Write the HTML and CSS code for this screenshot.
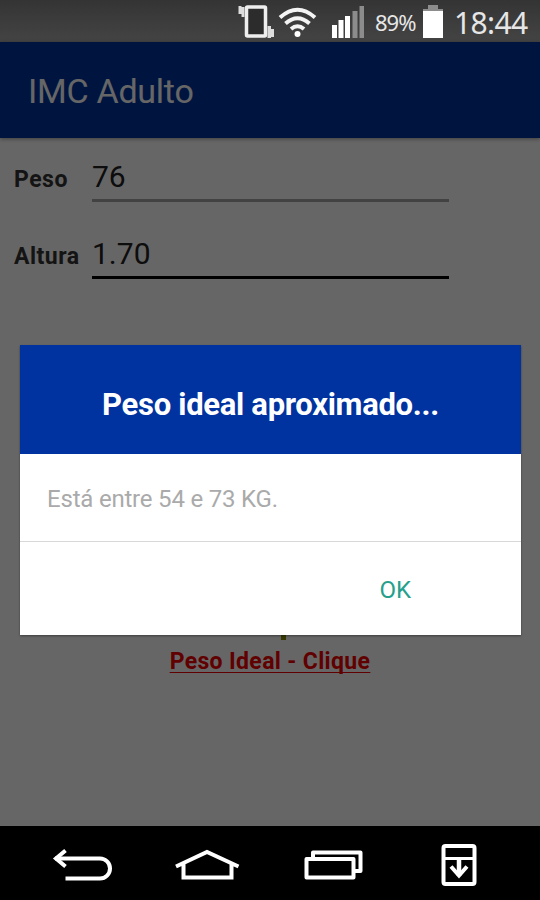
FILE: index.html
```html
<!DOCTYPE html>
<html lang="pt-BR">
<head>
    <meta charset="UTF-8">
    <meta name="viewport" content="width=device-width, initial-scale=1.0">
    <title>IMC Adulto</title>
    <link rel="stylesheet" href="styles.css">
</head>
<body>
    <div class="screen">
        <header class="status-bar">
            <svg class="status-icons" width="130" height="42" viewBox="0 0 130 42">
                <!-- vibrar -->
                <rect x="9.500" y="7" width="19" height="29" rx="1" fill="#2c2c2c" stroke="#eee" stroke-width="3.500"/>
                <path d="M1.500 6h3v8h-3zM4.500 7h3v10h-3zM30.500 26h3.500v12h-3.500zM34 29h3v8h-3z" fill="#ddd"/>
                <!-- wifi -->
                <g fill="none" stroke="#f4f4f4" stroke-width="4">
                    <path d="M43 17.500q17.500-15.500 35 0"/>
                    <path d="M48.500 23.500q12-10.500 24 0"/>
                    <path d="M54 29q6.500-5.500 13 0"/>
                </g>
                <circle cx="60.500" cy="34" r="3" fill="#fff"/>
                <!-- sinal -->
                <path d="M95 25h5v13h-5zM101.500 20h5v18h-5zM108 16h5v22h-5z" fill="#fff"/>
                <path d="M115.500 11h5v27h-5zM122.500 6h4.500v32h-4.500z" fill="#8c8c8c"/>
            </svg>
            <span class="battery-text">89%</span>
            <svg class="battery" width="22" height="42" viewBox="0 0 22 42">
                <path d="M6 5h10v4h5v3H1V9h5z" fill="#8c8c8c"/>
                <path d="M1 11h20v27H1z" fill="#fff"/>
            </svg>
            <span class="clock">18:44</span>
        </header>

        <main class="app">
            <div class="app-bar">
                <h1>IMC Adulto</h1>
            </div>
            <form class="form">
                <div class="form-group">
                    <label for="peso">Peso</label>
                    <input type="text" id="peso" value="76">
                </div>
                <div class="form-group active">
                    <label for="altura">Altura</label>
                    <input type="text" id="altura" value="1.70">
                </div>
            </form>
            <div class="result">
                <span class="mark"></span>
                <a class="link">Peso Ideal - Clique</a>
            </div>

            <div class="overlay">
                <div class="dialog">
                    <h2>Peso ideal aproximado...</h2>
                    <p>Está entre 54 e 73 KG.</p>
                    <div class="actions">
                        <button type="button" class="btn">OK</button>
                    </div>
                </div>
            </div>
        </main>

        <nav class="nav-bar">
            <svg width="60" height="74" viewBox="0 0 60 74" fill="none" stroke="#fff" stroke-width="4">
                <path d="M3 32.500H48a10 10 0 0 1 0 20H13.500"/>
                <path d="M13.500 24.500L4 32.500l9.500 8"/>
            </svg>
            <svg width="68" height="74" viewBox="0 0 68 74" fill="none" stroke="#fff" stroke-width="4">
                <path d="M3 40.500L34 26l31.500 14.500M10.500 37v14.500h48V37"/>
            </svg>
            <svg width="60" height="74" viewBox="0 0 60 74" fill="none" stroke="#fff" stroke-width="4" stroke-linejoin="round">
                <rect x="2.500" y="33" width="47" height="18.500"/>
                <path d="M9 32v-5.500h47.500v18.500h-6"/>
            </svg>
            <svg width="36" height="74" viewBox="0 0 36 74" fill="none" stroke="#fff" stroke-width="4">
                <rect x="2.500" y="20" width="31" height="38" rx="2"/>
                <path d="M2 32.500h31" stroke-width="3"/>
                <path d="M18 32v18" stroke-width="4.500"/>
                <path d="M10 40.500l8 9 8-9"/>
            </svg>
        </nav>
    </div>
</body>
</html>
```

FILE: styles.css
```css
* {
    box-sizing: border-box;
}
body {
    margin: 0;
    font-family: Roboto, Arial, sans-serif;
    background: #000;
}
.screen {
    width: 540px;
    height: 900px;
    display: flex;
    flex-direction: column;
    overflow: hidden;
}
.status-bar {
    height: 42px;
    display: flex;
    align-items: center;
    padding-left: 237px;
    background: linear-gradient(#343434, #444);
    color: #e6e6e6;
    font-family: "Noto Sans", sans-serif;
    white-space: nowrap;
}
.status-icons {
    flex: none;
}
.battery-text {
    width: 41px;
    margin: 2px 0 0 8px;
    font-size: 22px;
    letter-spacing: -1px;
}
.battery {
    flex: none;
    margin-left: 6px;
}
.clock {
    margin: 2px 0 0 10px;
    font-size: 30px;
    letter-spacing: -0.6px;
}
.app {
    position: relative;
    height: 784px;
    background: #fff;
}
.app-bar {
    height: 96px;
    padding-left: 28px;
    background: #0033a0;
    box-shadow: 0 1px 4px rgba(0,0,0,0.4);
}
h1 {
    margin: 0;
    font-size: 34px;
    font-weight: 400;
    letter-spacing: -0.25px;
    line-height: 98px;
    color: #fff;
}
.form {
    padding: 17px 14px 0;
}
.form-group {
    display: flex;
    height: 77px;
}
label {
    width: 78px;
    padding-top: 11px;
    font-size: 23px;
    line-height: 28px;
    font-weight: 700;
    letter-spacing: 0.5px;
    color: #333;
}
input {
    width: 357px;
    height: 47px;
    padding: 0 0 2px;
    border: none;
    border-bottom: 3px solid #a6a6a6;
    background: none;
    font-family: inherit;
    font-size: 30px;
    color: #222;
    outline: none;
}
.active input {
    border-bottom-color: #000;
}
.result {
    display: flex;
    flex-direction: column;
    align-items: center;
    padding-top: 321px;
}
.mark {
    width: 5px;
    height: 10px;
    margin-left: 26px;
    background: #8a9000;
}
.link {
    margin-top: 7px;
    font-size: 23px;
    line-height: 30px;
    font-weight: 700;
    letter-spacing: 0.35px;
    color: #f00000;
    text-decoration: underline;
    text-decoration-thickness: 1px;
    text-underline-offset: 3px;
    text-decoration-skip-ink: none;
}
.overlay {
    position: absolute;
    inset: 0;
    padding: 303px 19px 0 20px;
    background: rgba(0,0,0,0.6);
}
.dialog {
    height: 290px;
    background: #fff;
    box-shadow: 0 1px 2px rgba(0,0,0,0.4);
}
h2 {
    margin: 0;
    height: 109px;
    background: #0033a0;
    color: #fff;
    font-size: 31px;
    line-height: 120px;
    font-weight: 700;
    letter-spacing: -0.3px;
    text-align: center;
}
p {
    margin: 0;
    height: 88px;
    padding-left: 27px;
    border-bottom: 1px solid #d8d8d8;
    font-size: 24px;
    line-height: 90px;
    letter-spacing: -0.2px;
    color: #aaa;
}
.actions {
    display: flex;
    justify-content: flex-end;
    padding: 33px 110px 0 0;
}
.btn {
    padding: 0;
    border: none;
    background: none;
    font-family: inherit;
    font-size: 24px;
    line-height: 30px;
    color: #26a08c;
}
.nav-bar {
    flex: 1;
    display: flex;
    align-items: flex-start;
    padding-left: 52px;
    background: #000;
}
.nav-bar svg:nth-child(2) {
    margin-left: 61px;
}
.nav-bar svg:nth-child(3) {
    margin-left: 63px;
}
.nav-bar svg:nth-child(4) {
    margin-left: 77px;
}
```
